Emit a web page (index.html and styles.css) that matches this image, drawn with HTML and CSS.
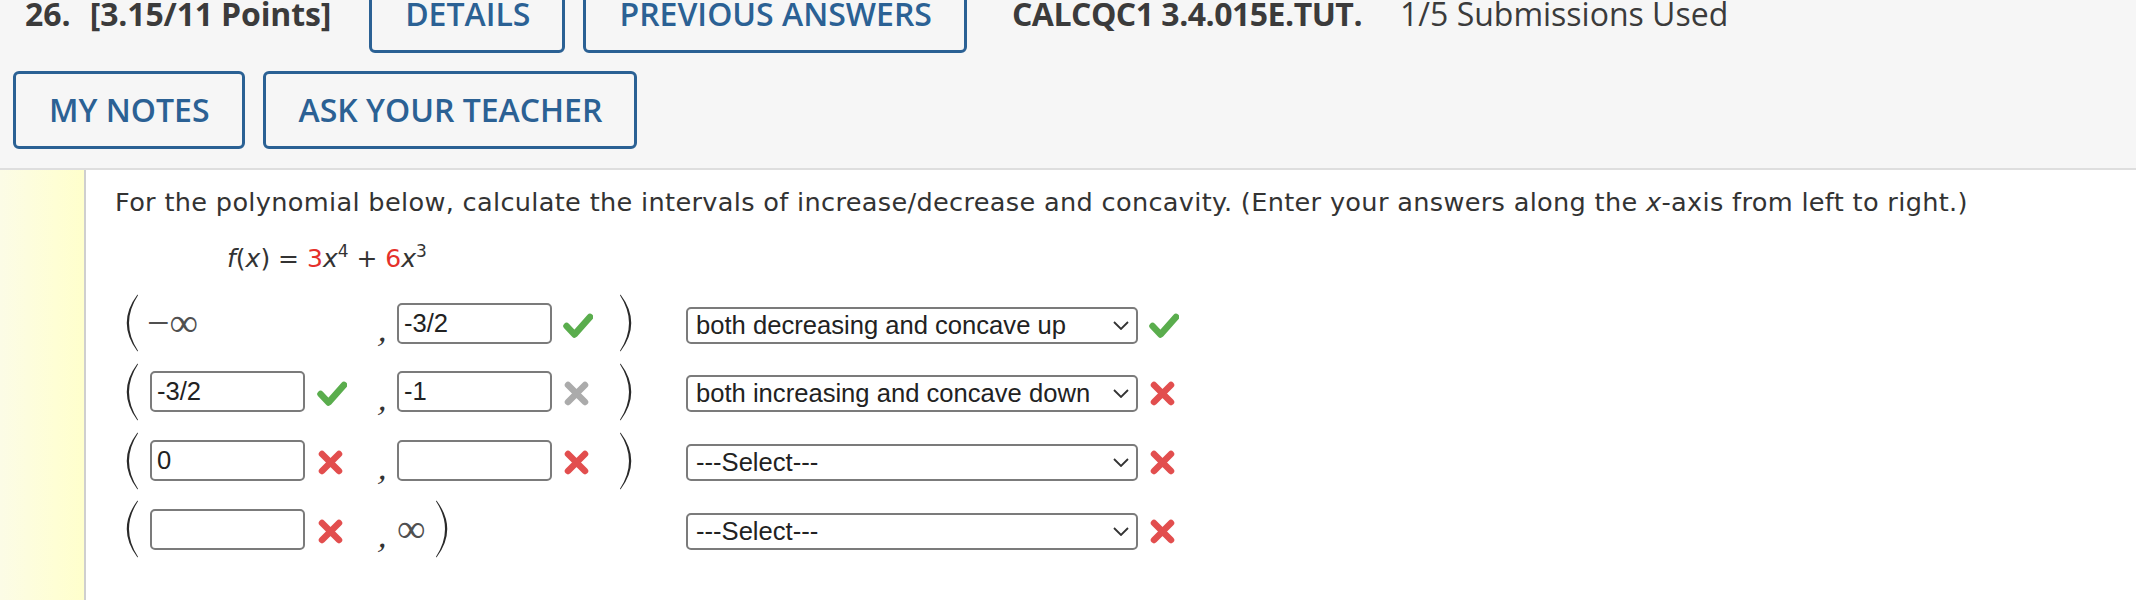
FILE: index.html
```html
<!DOCTYPE html>
<html lang="en">
<head>
<meta charset="utf-8">
<title>Question 26</title>
<link rel="stylesheet" href="styles.css">
</head>
<body>
<header class="qhead">
  <div class="hrow hrow-top">
    <span class="qnum">26.</span>
    <span class="qpts">[3.15/11 Points]</span>
    <button class="hbtn hbtn-first">DETAILS</button>
    <button class="hbtn">PREVIOUS ANSWERS</button>
    <span class="qid">CALCQC1 3.4.015E.TUT.</span>
    <span class="qsub">1/5 Submissions Used</span>
  </div>
  <div class="hrow">
    <button class="hbtn">MY NOTES</button>
    <button class="hbtn">ASK YOUR TEACHER</button>
  </div>
</header>
<main class="qbody">
  <aside class="stripe"></aside>
  <section class="content">
    <p class="prompt">For the polynomial below, calculate the intervals of increase/decrease and concavity. (Enter your answers along the <i>x</i>-axis from left to right.)</p>
    <p class="formula"><i>f</i>(<i>x</i>) = <span class="coef">3</span><i>x</i><sup>4</sup> + <span class="coef">6</span><i>x</i><sup>3</sup></p>

    <div class="intervals">
      <!-- row 1 -->
      <div class="irow">
        <svg class="paren" viewBox="0 0 13 58"><path d="M12.5 0.5 Q-9 29 12.5 57.5 L13 56.8 Q-5 29 13 1.2 Z"/></svg>
        <div class="lcell"><span class="mathval neg">&minus;&infin;</span></div>
        <div class="comma"><span>,</span></div>
        <div class="rcell">
          <input class="field" type="text" value="-3/2" readonly>
          <svg class="mark" viewBox="0 0 30 26"><path class="ok" d="M3.5 13 L11.5 21.5 L27 4"/></svg>
          <svg class="paren" viewBox="0 0 13 58"><path d="M0.5 0.5 Q22 29 0.5 57.5 L0 56.8 Q18 29 0 1.2 Z"/></svg>
        </div>
        <div class="select"><span>both decreasing and concave up</span><svg class="chev" viewBox="0 0 16 9"><path d="M1 1 L8 8 L15 1"/></svg></div>
        <svg class="mark smark" viewBox="0 0 30 26"><path class="ok" d="M3.5 13 L11.5 21.5 L27 4"/></svg>
      </div>
      <!-- row 2 -->
      <div class="irow">
        <svg class="paren" viewBox="0 0 13 58"><path d="M12.5 0.5 Q-9 29 12.5 57.5 L13 56.8 Q-5 29 13 1.2 Z"/></svg>
        <div class="lcell">
          <input class="field" type="text" value="-3/2" readonly>
          <svg class="mark" viewBox="0 0 30 26"><path class="ok" d="M3.5 13 L11.5 21.5 L27 4"/></svg>
        </div>
        <div class="comma"><span>,</span></div>
        <div class="rcell">
          <input class="field" type="text" value="-1" readonly>
          <svg class="mark" viewBox="0 0 30 26"><path class="bad grey" d="M5 4 L22 21 M22 4 L5 21"/></svg>
          <svg class="paren" viewBox="0 0 13 58"><path d="M0.5 0.5 Q22 29 0.5 57.5 L0 56.8 Q18 29 0 1.2 Z"/></svg>
        </div>
        <div class="select"><span>both increasing and concave down</span><svg class="chev" viewBox="0 0 16 9"><path d="M1 1 L8 8 L15 1"/></svg></div>
        <svg class="mark smark" viewBox="0 0 30 26"><path class="bad" d="M5 4 L22 21 M22 4 L5 21"/></svg>
      </div>
      <!-- row 3 -->
      <div class="irow">
        <svg class="paren" viewBox="0 0 13 58"><path d="M12.5 0.5 Q-9 29 12.5 57.5 L13 56.8 Q-5 29 13 1.2 Z"/></svg>
        <div class="lcell">
          <input class="field" type="text" value="0" readonly>
          <svg class="mark" viewBox="0 0 30 26"><path class="bad" d="M5 4 L22 21 M22 4 L5 21"/></svg>
        </div>
        <div class="comma"><span>,</span></div>
        <div class="rcell">
          <input class="field" type="text" value="" readonly>
          <svg class="mark" viewBox="0 0 30 26"><path class="bad" d="M5 4 L22 21 M22 4 L5 21"/></svg>
          <svg class="paren" viewBox="0 0 13 58"><path d="M0.5 0.5 Q22 29 0.5 57.5 L0 56.8 Q18 29 0 1.2 Z"/></svg>
        </div>
        <div class="select"><span>---Select---</span><svg class="chev" viewBox="0 0 16 9"><path d="M1 1 L8 8 L15 1"/></svg></div>
        <svg class="mark smark" viewBox="0 0 30 26"><path class="bad" d="M5 4 L22 21 M22 4 L5 21"/></svg>
      </div>
      <!-- row 4 -->
      <div class="irow">
        <svg class="paren" viewBox="0 0 13 58"><path d="M12.5 0.5 Q-9 29 12.5 57.5 L13 56.8 Q-5 29 13 1.2 Z"/></svg>
        <div class="lcell">
          <input class="field" type="text" value="" readonly>
          <svg class="mark" viewBox="0 0 30 26"><path class="bad" d="M5 4 L22 21 M22 4 L5 21"/></svg>
        </div>
        <div class="comma"><span>,</span></div>
        <div class="rcell">
          <span class="mathval">&infin;</span>
          <svg class="paren paren-tight" viewBox="0 0 13 58"><path d="M0.5 0.5 Q22 29 0.5 57.5 L0 56.8 Q18 29 0 1.2 Z"/></svg>
        </div>
        <div class="select"><span>---Select---</span><svg class="chev" viewBox="0 0 16 9"><path d="M1 1 L8 8 L15 1"/></svg></div>
        <svg class="mark smark" viewBox="0 0 30 26"><path class="bad" d="M5 4 L22 21 M22 4 L5 21"/></svg>
      </div>
    </div>
  </section>
</main>
</body>
</html>
```

FILE: styles.css
```css
html, body {
  margin: 0;
  padding: 0;
  background: #ffffff;
  overflow: hidden;
}

body {
  font-family: "Open Sans", "Liberation Sans", sans-serif;
}

/* ---------- header ---------- */
.qhead {
  background: #f6f6f6;
  border-bottom: 2px solid #dedede;
  padding: 0 13px 19px 13px;
  display: flex;
  flex-direction: column;
  gap: 18px;
}

.hrow {
  display: flex;
  align-items: center;
}

.hrow-top {
  margin-top: -25px;
}

.qnum,
.qpts,
.qid {
  font-family: "Open Sans", sans-serif;
  font-weight: 700;
  font-size: 32px;
  line-height: 26px;
  color: #3b3b3b;
  white-space: nowrap;
}

.qnum {
  margin-left: 12px;
}

.qpts {
  margin-left: 19px;
  letter-spacing: -0.15px;
}

.qid {
  margin-left: 27px;
  letter-spacing: -0.5px;
}

.qsub {
  font-family: "Open Sans", sans-serif;
  font-weight: 400;
  font-size: 32px;
  line-height: 26px;
  color: #3b3b3b;
  margin-left: 38px;
  white-space: nowrap;
}

.hbtn {
  height: 78px;
  box-sizing: border-box;
  border: 3px solid #2b6194;
  border-radius: 6px;
  background: transparent;
  color: #2b6194;
  font-family: "Open Sans", sans-serif;
  font-weight: 600;
  font-size: 32px;
  line-height: 26px;
  padding: 0 32px 0 33px;
  margin: 0 18px 0 0;
  white-space: nowrap;
}

.hbtn-first {
  margin-left: 38px;
}

/* ---------- body ---------- */
.qbody {
  display: flex;
  min-height: 440px;
}

.stripe {
  flex: none;
  width: 84px;
  background: linear-gradient(to right, #fcfce6, #ffffcc);
  border-right: 2px solid #cfcfcf;
}

.content {
  flex: 1;
  padding: 18px 0 0 29px;
}

.prompt,
.formula {
  margin: 0;
  font-family: "DejaVu Sans", Verdana, sans-serif;
  font-size: 25px;
  line-height: 29px;
  color: #333333;
  white-space: nowrap;
}

.prompt {
  font-size: 25.6px;
  letter-spacing: 0.32px;
}

.formula {
  margin: 27px 0 0 112px;
}

.formula sup {
  font-size: 17px;
  line-height: 0;
  vertical-align: 10px;
}

.coef {
  color: #e5302a;
}

/* ---------- intervals ---------- */
.intervals {
  margin: 16px 0 0 10px;
}

.irow {
  display: flex;
  align-items: center;
  height: 68.67px;
}

.paren {
  flex: none;
  width: 13px;
  height: 58px;
  margin-right: 12px;
}

.paren path {
  fill: #2a2a2a;
}

.lcell {
  flex: none;
  width: 228px;
  display: flex;
  align-items: center;
}

.comma {
  flex: none;
  width: 19px;
  align-self: stretch;
  display: flex;
  align-items: center;
}

.comma span {
  font-family: "Liberation Serif", serif;
  font-size: 34px;
  line-height: 1;
  color: #333333;
  margin: 14px 0 0 2px;
  transform: skewX(-12deg);
}

.rcell {
  flex: none;
  width: 289px;
  display: flex;
  align-items: center;
}

.rcell .paren {
  margin: 0 0 0 27px;
}

.rcell .paren-tight {
  margin-left: 10px;
}

.field {
  flex: none;
  box-sizing: border-box;
  width: 155px;
  height: 41px;
  margin: 0;
  border: 2px solid #7b7b7b;
  border-radius: 5px;
  padding: 0 5px;
  background: #ffffff;
  font-family: "Liberation Sans", Arial, sans-serif;
  font-size: 25.6px;
  color: #222222;
  outline: none;
}

.mathval {
  font-family: "Liberation Serif", serif;
  font-size: 40px;
  line-height: 1;
  color: #505050;
  white-space: nowrap;
}

.mathval.neg {
  margin-left: -3px;
}

.mark {
  flex: none;
  width: 30px;
  height: 26px;
  margin: 5px 0 0 12px;
}

.rcell .mark {
  margin-left: 11px;
}

.mark path {
  fill: none;
  stroke-width: 6.5;
  stroke-linejoin: round;
}

.mark path.ok {
  stroke: #5aad4d;
  stroke-linecap: round;
}

.mark path.bad {
  stroke: #e24e4e;
  stroke-linecap: round;
}

.mark path.bad.grey {
  stroke: #ababab;
}

.select {
  flex: none;
  box-sizing: border-box;
  width: 452px;
  height: 37px;
  margin-top: 4px;
  border: 2px solid #7b7b7b;
  border-radius: 5px;
  background: #ffffff;
  padding: 0 7px 0 8px;
  display: flex;
  align-items: center;
  justify-content: space-between;
  font-family: "Liberation Sans", Arial, sans-serif;
  font-size: 25.6px;
  color: #222222;
  white-space: nowrap;
}

.chev {
  flex: none;
  width: 16px;
  height: 9px;
}

.chev path {
  fill: none;
  stroke: #333333;
  stroke-width: 1.8;
}

.smark {
  margin-left: 11px;
}
```
